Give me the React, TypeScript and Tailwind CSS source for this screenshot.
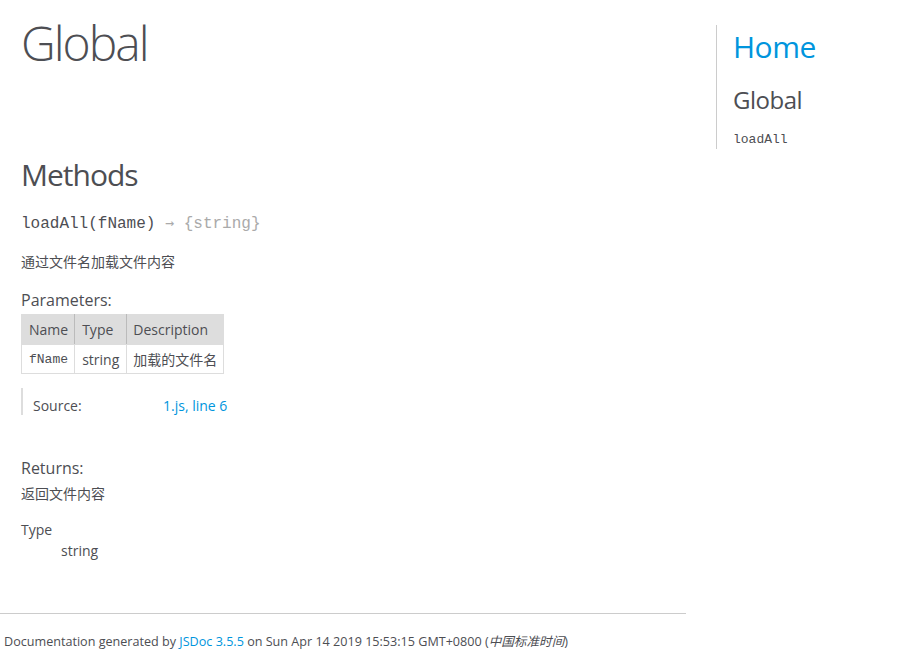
const sans = "font-['Open_Sans','Noto_Sans_CJK_SC',sans-serif]";
const mono = "font-['Liberation_Mono','DejaVu_Sans_Mono',monospace]";

const params = [{ name: "fName", type: "string", desc: "加载的文件名" }];

export default function App() {
  return (
    <div className={`${sans} flex min-h-[672px] bg-white text-[14px] text-[#4d4e53]`}>
      {/* main column */}
      <div className="w-[716px] flex-none">
        <section className="w-[686px] border-b border-[#ccc] pb-[52px] pl-[21px]">
          <h1 className="mt-[19px] text-[48px] leading-[48px] font-light tracking-[-2px]">Global</h1>

          <h3 className="mt-[90px] text-[30px] leading-[36px] font-normal tracking-[-1px]">Methods</h3>

          <h4 className={`${mono} mt-[19px] h-[24px] text-[16px] leading-[24px]`}>
            loadAll(fName){" "}
            <span className="text-[#aaa]">
              <span className="font-['DejaVu_Sans_Mono',monospace] text-[15px] leading-[0]">→</span> {"{string}"}
            </span>
          </h4>

          <p className="mt-[15px] leading-[21px]">通过文件名加载文件内容</p>

          <h5 className="mt-[16px] text-[16px] leading-[24px]">Parameters:</h5>

          <table className="mt-[2px] border-collapse leading-[21px]">
            <thead>
              <tr className="bg-[#ddd]">
                <th className="border border-[#ddd] border-r-[#bbb] pl-[7px] pr-[6px] py-[4px] text-left font-normal">Name</th>
                <th className="border border-[#ddd] border-r-[#bbb] px-[7px] py-[4px] text-left font-normal">Type</th>
                <th className="border border-[#ddd] px-[6px] py-[4px] text-left font-normal">Description</th>
              </tr>
            </thead>
            <tbody>
              {params.map((p) => (
                <tr key={p.name}>
                  <td className={`${mono} border border-[#ddd] pl-[7px] pr-[6px] pt-[4px] pb-[3px] text-[13px]`}>{p.name}</td>
                  <td className="border border-[#ddd] px-[7px] pt-[4px] pb-[3px]">{p.type}</td>
                  <td className="border border-[#ddd] px-[6px] pt-[4px] pb-[3px]">{p.desc}</td>
                </tr>
              ))}
            </tbody>
          </table>

          {/* source details */}
          <dl className="mt-[14px] flex h-[27px] border-l-2 border-[#ddd] pt-[7px] leading-[21px]">
            <dt className="w-[140px] pl-[10px]">Source:</dt>
            <dd className="text-[#0095dd]">
              <a href="#">1.js</a>, <a href="#">line 6</a>
            </dd>
          </dl>

          <h5 className="mt-[41px] text-[16px] leading-[24px]">Returns:</h5>
          <p className="mt-[3px] leading-[21px]">返回文件内容</p>

          <dl className="mt-[15px] leading-[21px]">
            <dt>Type</dt>
            <dd className="pl-[40px]">string</dd>
          </dl>
        </section>

        <footer className="mt-[18px] pl-[4px] text-[12.6px] leading-[19px]">
          Documentation generated by <a href="#" className="text-[#0095dd]">JSDoc 3.5.5</a> on Sun Apr 14 2019
          15:53:15 GMT+0800 (<span className="italic">中国标准时间</span>)
        </footer>
      </div>

      {/* nav */}
      <nav className="mt-[25px] self-start border-l border-[#ccc] pt-[4px] pl-[16px]">
        <h2 className="text-[30px] leading-[36px] font-normal tracking-[-0.5px] text-[#0095dd]">
          <a href="#">Home</a>
        </h2>
        <h3 className="mt-[20px] text-[24px] leading-[30px] font-normal tracking-[-0.5px]">Global</h3>
        <ul className="mt-[16px]">
          <li className={`${mono} text-[13px] leading-[18px]`}>
            <a href="#">loadAll</a>
          </li>
        </ul>
      </nav>
    </div>
  );
}
